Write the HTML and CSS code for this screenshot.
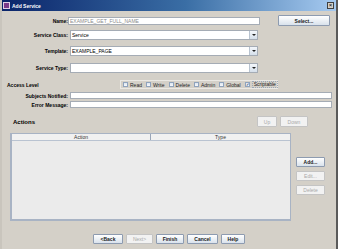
FILE: index.html
```html
<!DOCTYPE html>
<html>
  <head>
    <title>Add Service</title>
    <link rel="stylesheet" href="styles.css">
  </head>
  <body>
    <div class="window">
      <div class="titlebar">
        <span class="app-icon"></span>
        <span class="title">Add Service</span>
        <span class="close-btn">&times;</span>
      </div>
      <div class="content">
        <div class="form-row row-name">
          <label class="field-label">Name:</label>
          <div class="text-field name-field disabled-text">EXAMPLE_GET_FULL_NAME</div>
          <button class="btn select-btn">Select...</button>
        </div>
        <div class="form-row row-combo first-combo">
          <label class="field-label">Service Class:</label>
          <div class="combo"><span class="combo-value">Service</span><span class="combo-arrow"></span></div>
        </div>
        <div class="form-row row-combo combo-template">
          <label class="field-label">Template:</label>
          <div class="combo"><span class="combo-value">EXAMPLE_PAGE</span><span class="combo-arrow"></span></div>
        </div>
        <div class="form-row row-combo combo-type">
          <label class="field-label">Service Type:</label>
          <div class="combo"><span class="combo-value"></span><span class="combo-arrow"></span></div>
        </div>
        <div class="form-row row-access">
          <label class="access-label">Access Level</label>
          <div class="check-panel">
            <span class="check"><span class="box"></span>Read</span>
            <span class="check"><span class="box"></span>Write</span>
            <span class="check"><span class="box"></span>Delete</span>
            <span class="check"><span class="box"></span>Admin</span>
            <span class="check"><span class="box"></span>Global</span>
            <span class="check checked"><span class="box">&#10003;</span><span class="focus">Scriptable</span></span>
          </div>
        </div>
        <div class="form-row row-text first-text">
          <label class="field-label">Subjects Notified:</label>
          <div class="text-field wide-field"></div>
        </div>
        <div class="form-row row-text">
          <label class="field-label">Error Message:</label>
          <div class="text-field wide-field"></div>
        </div>
        <div class="form-row row-actions">
          <span class="section-title">Actions</span>
          <div class="updown">
            <button class="btn disabled up-btn">Up</button>
            <button class="btn disabled down-btn">Down</button>
          </div>
        </div>
        <div class="actions-area">
          <div class="table">
            <div class="table-head">
              <div class="col col-action">Action</div>
              <div class="col col-type">Type</div>
            </div>
            <div class="table-body"></div>
          </div>
          <div class="side-buttons">
            <button class="btn side-btn">Add...</button>
            <button class="btn side-btn disabled">Edit...</button>
            <button class="btn side-btn disabled">Delete</button>
          </div>
        </div>
        <div class="bottom-bar">
          <button class="btn back-btn">&lt;Back</button>
          <button class="btn disabled next-btn">Next&gt;</button>
          <button class="btn finish-btn">Finish</button>
          <button class="btn cancel-btn">Cancel</button>
          <button class="btn help-btn">Help</button>
        </div>
      </div>
    </div>
  </body>
</html>
```

FILE: styles.css
```css
* {
  box-sizing: border-box;
}
body {
  margin: 0;
  width: 338px;
  height: 249px;
  overflow: hidden;
  background-color: #c9c5bd;
  font-family: "Liberation Sans", Arial, sans-serif;
  font-size: 5px;
  color: #000;
}
.window {
  margin-left: 2px;
  width: 336px;
  height: 249px;
  background-color: #d4d0c8;
  border-right: 2px solid #5a5a5a;
}

/* title bar */
.titlebar {
  height: 11px;
  display: flex;
  align-items: center;
  background: linear-gradient(to right, #0a246a 0%, #3a6ea5 55%, #a6caf0 100%);
  padding: 0 2px 0 1px;
}
.app-icon {
  width: 7px;
  height: 7px;
  background-color: #7a3a8a;
  border: 1px solid #e0d0e8;
}
.title {
  color: #fff;
  font-weight: bold;
  margin-left: 2px;
  flex: 1;
}
.close-btn {
  width: 7px;
  height: 7px;
  background-color: #d4d0c8;
  border: 1px solid #404040;
  font-size: 6px;
  line-height: 4px;
  text-align: center;
  color: #000;
}

.content {
  padding-top: 4px;
}

/* form rows */
.form-row {
  display: flex;
  align-items: center;
}
.field-label {
  width: 66px;
  text-align: right;
  font-weight: bold;
  white-space: nowrap;
}
.text-field {
  height: 8px;
  background-color: #fff;
  border: 1px solid #a5acb5;
  line-height: 6px;
  padding-left: 1px;
  white-space: nowrap;
}
.disabled-text {
  color: #8c8c8c;
}
.row-name {
  height: 11px;
}
.name-field {
  width: 192px;
}
.select-btn {
  margin-left: 18px;
  width: 52px;
  height: 11px;
}
.row-combo {
  height: 10px;
}
.first-combo {
  margin-top: 4px;
}
.combo-template {
  margin-top: 6px;
}
.combo-type {
  margin-top: 7px;
}
.combo {
  margin-left: 2px;
  width: 188px;
  height: 10px;
  display: flex;
  background-color: #fff;
  border: 1px solid #a5acb5;
}
.combo-value {
  flex: 1;
  padding-left: 1px;
  line-height: 8px;
}
.combo-arrow {
  width: 8px;
  background: linear-gradient(#f4f7fb, #d5dfea);
  border-left: 1px solid #b8c3d0;
  position: relative;
}
.combo-arrow::after {
  content: "";
  position: absolute;
  left: 2px;
  top: 3px;
  border-left: 2px solid transparent;
  border-right: 2px solid transparent;
  border-top: 2px solid #222;
}

/* access level */
.row-access {
  margin-top: 7px;
  height: 9px;
}
.access-label {
  width: 118px;
  padding-left: 5px;
  font-weight: bold;
}
.check-panel {
  width: 158px;
  height: 9px;
  display: flex;
  align-items: center;
  gap: 4px;
  padding-left: 2px;
  border: 1px solid #ebe9e4;
}
.check {
  display: flex;
  align-items: center;
  gap: 2px;
  color: #222;
}
.box {
  width: 5px;
  height: 5px;
  border: 1px solid #8fa3bd;
  background: linear-gradient(#dde6f0, #f6f8fb);
  font-size: 4px;
  line-height: 3px;
  text-align: center;
  color: #1c3a5c;
  font-weight: bold;
}
.focus {
  border: 1px dotted #9aa8b8;
  padding: 0 1px;
  line-height: 5px;
}

.row-text {
  margin-top: 2px;
  height: 7px;
}
.first-text {
  margin-top: 3px;
}
.wide-field {
  margin-left: 2px;
  width: 262px;
  height: 7px;
}

/* actions */
.row-actions {
  margin-top: 8px;
  height: 11px;
}
.section-title {
  font-size: 6px;
  font-weight: bold;
  padding-left: 11px;
}
.updown {
  margin-left: auto;
  margin-right: 28px;
  display: flex;
  gap: 3px;
}
.up-btn {
  width: 20px;
  height: 11px;
}
.down-btn {
  width: 28px;
  height: 11px;
}
.actions-area {
  margin-top: 6px;
  display: flex;
  padding-left: 8px;
}
.table {
  width: 281px;
  height: 88px;
  display: flex;
  flex-direction: column;
  border: 1px solid #a8b3c4;
  border-left-width: 2px;
  border-bottom-width: 2px;
  background-color: #ebebeb;
}
.table-head {
  display: flex;
  height: 7px;
  background-color: #f1f1f1;
  border-bottom: 1px solid #b9c3d1;
  color: #333;
  line-height: 6px;
}
.col {
  text-align: center;
}
.col-action {
  width: 139px;
  border-right: 1px solid #9aa6b8;
}
.col-type {
  flex: 1;
}
.table-body {
  flex: 1;
}
.side-buttons {
  margin-left: 5px;
  padding-top: 24px;
  display: flex;
  flex-direction: column;
  gap: 4px;
}
.side-btn {
  width: 29px;
  height: 10px;
}

/* bottom */
.bottom-bar {
  margin-top: 13px;
  display: flex;
  justify-content: center;
  gap: 3px;
}
.bottom-bar .btn {
  height: 10px;
}
.back-btn {
  width: 30px;
}
.next-btn {
  width: 27px;
}
.finish-btn {
  width: 28px;
}
.cancel-btn {
  width: 31px;
}
.help-btn {
  width: 24px;
}

/* buttons */
.btn {
  font-family: "Liberation Sans", Arial, sans-serif;
  font-size: 5px;
  font-weight: bold;
  color: #1a1a1a;
  padding: 0;
  border: 1px solid #8d9bb0;
  border-radius: 1px;
  background: linear-gradient(#ffffff, #d9e2ec);
}
.btn.disabled {
  color: #a8a8a8;
  font-weight: normal;
  border-color: #c4c4c4;
  background: #f2f2f2;
}
```
